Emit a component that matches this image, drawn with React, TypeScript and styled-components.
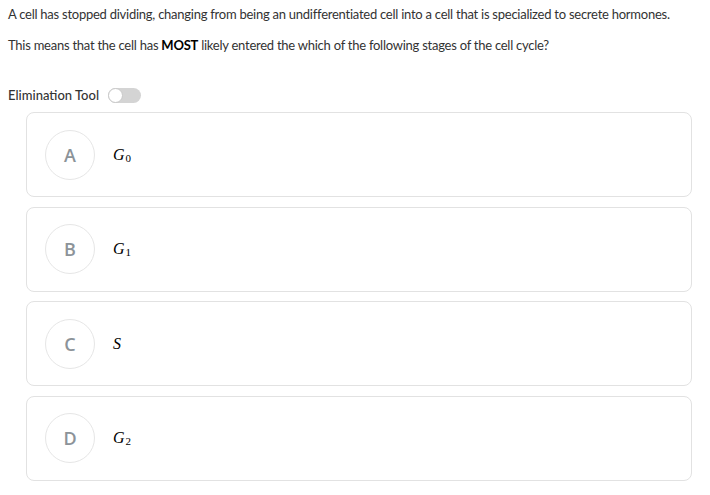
import React from 'react';
import styled, { createGlobalStyle } from 'styled-components';

const GlobalStyle = createGlobalStyle`
  html, body {
    margin: 0;
    padding: 0;
    background: #ffffff;
  }
  body {
    font-family: Lato, "Open Sans", sans-serif;
    color: #333333;
  }
`;

const Choices = [
  { id: 'A', base: 'G', sub: '0' },
  { id: 'B', base: 'G', sub: '1' },
  { id: 'C', base: 'S', sub: '' },
  { id: 'D', base: 'G', sub: '2' },
];

const App = () => {
  return (
    <Page>
      <GlobalStyle />
      <Stem>
        <p>
          A cell has stopped dividing, changing from being an undifferentiated cell into a cell
          that is specialized to secrete hormones.
        </p>
        <p>
          This means that the cell has <strong>MOST</strong> likely entered the which of the
          following stages of the cell cycle?
        </p>
      </Stem>
      <ToolRow>
        <span>Elimination Tool</span>
        <Toggle aria-label="Elimination Tool">
          <Knob />
        </Toggle>
      </ToolRow>
      <ChoiceList>
        {Choices.map((choice) => (
          <ChoiceCard key={choice.id}>
            <Letter>{choice.id}</Letter>
            <MathLabel>
              <i>{choice.base}</i>
              {choice.sub && <sub>{choice.sub}</sub>}
            </MathLabel>
          </ChoiceCard>
        ))}
      </ChoiceList>
    </Page>
  );
};

const Page = styled.div`
  padding: 6px 18px 14px 8px;
`;

const Stem = styled.div`
  font-size: 13px;
  letter-spacing: -0.25px;
  line-height: 17px;
  color: #333333;

  & p {
    margin: 0 0 14px 0;
  }

  & strong {
    font-weight: 700;
    color: #000000;
  }
`;

const ToolRow = styled.div`
  display: flex;
  align-items: center;
  gap: 9px;
  margin-top: 33px;
  font-size: 13px;
  font-weight: 500;
  color: #333333;
`;

const Toggle = styled.div`
  position: relative;
  width: 33px;
  height: 15px;
  border-radius: 8px;
  background-color: #d4d4d4;
`;

const Knob = styled.div`
  position: absolute;
  top: 0;
  left: 0;
  width: 13px;
  height: 13px;
  border-radius: 50%;
  background-color: #ffffff;
  border: 1px solid #c8c8c8;
`;

const ChoiceList = styled.div`
  display: flex;
  flex-direction: column;
  gap: 9.5px;
  margin: 9px 0 0 18px;
`;

const ChoiceCard = styled.div`
  display: flex;
  align-items: center;
  gap: 18px;
  height: 85px;
  box-sizing: border-box;
  padding: 0 18px;
  border: 1px solid #e2e2e2;
  border-radius: 8px;
  background-color: #ffffff;
`;

const Letter = styled.div`
  display: flex;
  align-items: center;
  justify-content: center;
  width: 50px;
  height: 50px;
  box-sizing: border-box;
  border: 1px solid #e6e6e6;
  border-radius: 50%;
  font-family: "Open Sans", Lato, sans-serif;
  font-size: 18px;
  font-weight: 600;
  color: #8c9399;
`;

const MathLabel = styled.div`
  font-family: "Liberation Serif", "Times New Roman", serif;
  font-size: 16px;
  color: #000000;

  & i {
    font-style: italic;
  }

  & sub {
    font-size: 11px;
    font-style: normal;
    vertical-align: -2px;
    margin-left: 1px;
  }
`;

export default App;
